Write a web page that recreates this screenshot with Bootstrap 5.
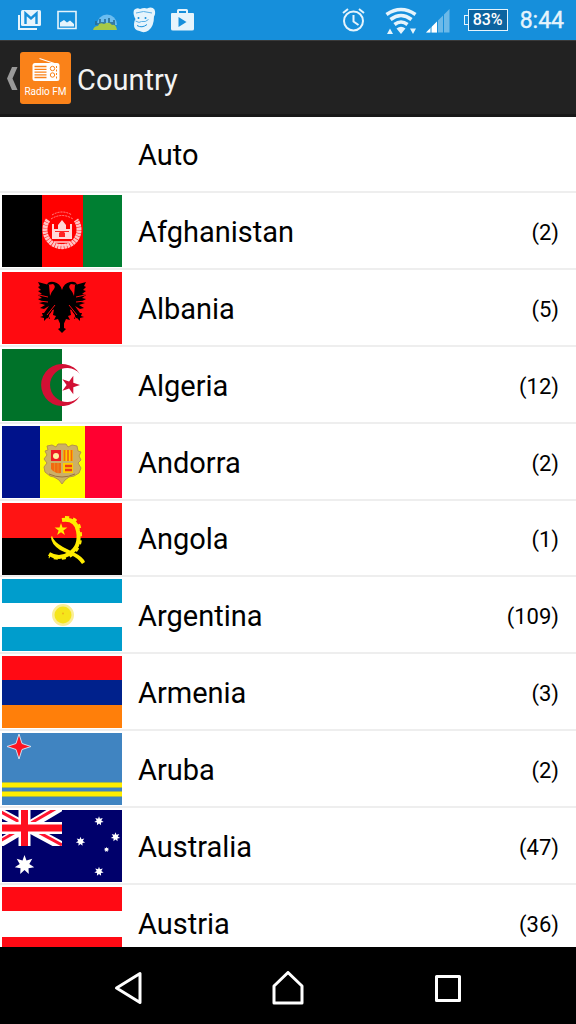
<!DOCTYPE html>
<html lang="en">
<head>
<meta charset="utf-8">
<meta name="viewport" content="width=device-width, initial-scale=1">
<title>Country</title>
<link rel="stylesheet" href="https://cdn.jsdelivr.net/npm/bootstrap@5.3.0/dist/css/bootstrap.min.css">
<style>
body{font-family:Roboto,sans-serif;background:#fff;color:#000;height:100vh}
svg{display:block;flex:none}
.statusbar{height:40px;background:#168fdb;color:#e6f4fc;padding:0 12px 0 16px}
.clock{font-size:23px;line-height:40px;margin-left:12px;padding-top:2px;-webkit-text-stroke:.4px}
.battery{font-size:16px;line-height:20px;background:#0c64a0;border:1px solid #e6f4fc;width:40px;height:22px;font-weight:500;color:#fff}
.batt-tip{width:4px;height:10px;border:1px solid #e6f4fc;border-right:0}
.appbar{height:77px;background:#222;border-top:1px solid #3a3a3a;border-bottom:3px solid #181818;padding:0 6px}
.upbtn{background:none;border:0}
.appbar h1{font-size:29px;line-height:36px;color:#f3f3f3;font-weight:400;margin-left:6px;padding-top:4px}
.countries{overflow:hidden;min-height:0}
.countries .list-group-item{height:77px;padding:2px 17px 0 2px;border:0;border-bottom:2px solid #eee;color:#000;flex:none}
.countries .list-group-item:nth-child(5n+1){height:76px}
.flag{width:120px;height:72px;margin-right:16px;align-self:flex-start}
.title{font-size:29px;line-height:36px}
.tally{font-size:22px;line-height:28px;padding-top:2px}
.navkeys{height:77px;background:#000;padding:0 48px}
.navkeys button{background:none;border:0;height:77px;padding:4px 0 0}
</style>
</head>
<body class="d-flex flex-column overflow-hidden">
<div class="statusbar d-flex align-items-center justify-content-between flex-shrink-0">
  <div class="d-flex align-items-center">
    <svg width="180" height="40" viewBox="16 0 180 40" role="img" aria-label="Notifications">
      <path d="M19 15v14h18" fill="none" stroke="#e6f4fc" stroke-width="2"/><path d="M58 11.500h18v17H58z" fill="none" stroke="#e6f4fc" stroke-width="1.600"/>
      <rect x="21" y="10" width="20" height="16" rx="1.500" fill="#e6f4fc"/>
      <path d="M25.500 24V13.500l5.500 5 5.500-5V24" fill="none" stroke="#168fdb" stroke-width="2.400"/>
      <path d="M60 26.500v-4l4-2.500 3 2.500 3-2 4 3.500v2.500z" fill="#e6f4fc"/>
      <path d="M97 25a10 10.500 0 0 1 20 0z" fill="#6bbdf0"/>
      <path d="M95 25v-4h2v2h2v-4h2v3h3v-3h2v4h2v-5h2v4h3v-2h2v5z" fill="#276a92" opacity=".8"/>
      <path d="M93 30q1-4 5-4 1-4 6-2 5-3 8 1 4-1 5 5z" fill="#a6c947"/>
      <path d="M134 10q3-3 6-1 4-1.500 7-.5 5-2.500 7.500 1 1.500 4-.5 7 0 10-5.500 14-4.500 3-9 .5-6-1-5.500-7 0-3 1.500-5-3-5-1.500-9z" fill="#e6f4fc"/>
      <path d="M136 13q7-3 16 0M135.500 21q4 2.500 6 .500 4 1 7-2" fill="none" stroke="#5bb0e6" stroke-width="1"/>
      <circle cx="138.500" cy="18" r="1" fill="#168fdb"/><circle cx="145.500" cy="18" r="1" fill="#168fdb"/>
      <path d="M137 25.500q5 3 10-1" fill="none" stroke="#168fdb"/>
      <path d="M172 13h5v-2.500q0-1.500 1.500-1.500h8q1.500 0 1.500 1.500V13h5q1 0 1 1v15q0 1.500-2 1.500h-19q-2 0-2-1.500V14q0-1 1-1zm7 0h7v-2h-7z" fill="#e6f4fc" fill-rule="evenodd"/>
      <path d="M178.500 17v10l8-5z" fill="#168fdb"/>
    </svg>
  </div>
  <div class="d-flex align-items-center">
    <svg width="120" height="40" viewBox="340 0 120 40" role="img" aria-label="Alarm, Wi-Fi, mobile signal">
      <g fill="none" stroke="#e6f4fc" stroke-width="2"><circle cx="353.500" cy="21" r="9.500"/><path d="M353.500 15v6.500l5 3.500M343 13l5-4M359 9l5 4"/></g>
      <g fill="none" stroke="#e6f4fc" stroke-width="3.600"><path d="M386.500 14.500q14.500-10 29 0M390.500 19.500q10.500-8 21 0M394.500 24.500q6.500-5 13 0"/></g>
      <path d="M396.500 28.500q4.500-3.500 9 0l-4.500 5.500z" fill="#e6f4fc"/>
      <path d="M387 34l3-5.500 3 5.500zM410 28.500h6l-3 5.500z" fill="#e6f4fc"/>
      <path d="M426 32.500L449.500 9v23.500z" fill="#6cb9e8"/><path d="M426 32.500l11-11v11z" fill="#fff"/>
      <path d="M431 24v9M437.500 18v15M443.500 12v21" stroke="#168fdb" stroke-width="1"/>
    </svg>
    <div class="d-flex align-items-center ms-1" aria-label="Battery"><span class="batt-tip"></span><span class="battery text-center">83%</span></div>
    <span class="clock">8:44</span>
  </div>
</div>

<header class="appbar d-flex align-items-center flex-shrink-0">
  <button class="upbtn d-flex align-items-center p-0" type="button" aria-label="Back">
    <svg width="14" height="52" viewBox="6 52 14 52"><path d="M12 67h5.500l-5 11.500 5 11.500H12L7 78.500z" fill="#999"/></svg>
    <svg width="51" height="52" viewBox="0 0 51 52">
      <rect width="51" height="52" rx="3" fill="#fa8219"/>
      <path d="M19.500 6.500L36 12" stroke="#fff" stroke-width="1.300"/>
      <rect x="12.500" y="11" width="27" height="18" rx="2.500" fill="#fff"/>
      <path d="M14.500 14.500h12M14.500 17.300h12M14.500 20.100h12M14.500 22.900h12M14.500 25.500h12" stroke="#fa8219" stroke-width="1.300"/>
      <g fill="none" stroke="#fa8219"><circle cx="32.500" cy="16.500" r="2.200"/><circle cx="32.500" cy="23" r="2.200"/></g>
      <path d="M36.500 14v13" stroke="#fa8219" stroke-width="1" stroke-dasharray="2 1.500"/>
      <text x="25.500" y="43" font-size="10" font-family="Roboto, sans-serif" fill="#fff" text-anchor="middle">Radio FM</text>
    </svg>
  </button>
  <h1 class="mb-0">Country</h1>
</header>

<main class="countries list-group list-group-flush flex-grow-1">
  <a href="#" class="list-group-item d-flex align-items-center"><span class="flag"></span><span class="title flex-grow-1">Auto</span></a>
  <a href="#" class="list-group-item d-flex align-items-center">
    <svg class="flag" viewBox="0 0 120 72"><path d="M0 0h40v72H0z"/><path fill="#f00" d="M40 0h41v72H40z"/><path fill="#007f32" d="M81 0h39v72H81z"/>
      <path d="M46 25a17 17 0 1 0 28 0" fill="none" stroke="#ffc4c4" stroke-width="5" stroke-dasharray="2.500 .5"/>
      <path d="M50 20q10-6 20 0M49 24q11-7 22 0" stroke="#f88" fill="none" stroke-dasharray="2 1"/>
      <path fill="#ffd8d8" d="M50 44V29h2v5h4v-4l4-5 4 5v4h4v-5h2v15z"/><path fill="#f22" d="M57 42v-4q3-4 6 0v4zM53 36h14v1H53z"/><path d="M52 47h16M54 50h12" stroke="#fcc" stroke-width="1.500"/></svg>
    <span class="title flex-grow-1">Afghanistan</span><span class="tally">(2)</span></a>
  <a href="#" class="list-group-item d-flex align-items-center">
    <svg class="flag" viewBox="0 0 120 72"><path fill="#ff0a10" d="M0 0h120v72H0z"/>
      <path d="M60 18q-2-7-8-8-6-1-7 3l6-1q3 2 1 5-3 3-4 7l-1-11-11-3 2 4-2 1 3 3-3 1 4 3-4 1 4 3-4 1 5 3-4 1 6 2-5 3 4 1 5-3-5 7-2 0 1 3-3 1 4 1 0 3 3-3 3 1-1-4 5-6-1 6 3 1-2 4 4-1 4 9 4-9 4 1-2-4 3-1-1-6 5 6-1 4 3-1 3 3 0-3 4-1-3-1 1-3-2 0-5-7 5 3 4-1-5-3 6-2-4-1 5-3-4-1 4-3-4-1 4-3-3-1 3-3-2-1 2-4-11 3-1 11q-1-4-4-7-2-3 1-5l6 1q-1-4-7-3-6 1-8 8z"/>
      <path d="M58 50h4v6l2 1-4 4-4-4 2-1z"/>
      <path d="M53 33l-8 10M67 33l8 10M51 38l-5 9M69 38l5 9M37 23l9 2M83 23l-9 2M37 29l9 1M83 29l-9 1" stroke="#ff0a10"/></svg>
    <span class="title flex-grow-1">Albania</span><span class="tally">(5)</span></a>
  <a href="#" class="list-group-item d-flex align-items-center">
    <svg class="flag" viewBox="0 0 120 72"><path fill="#fff" d="M0 0h120v72H0z"/><path fill="#007229" d="M0 0h60v72H0z"/>
      <path fill="#d21034" d="M78 25a21 21 0 1 0 0 22 17 17 0 1 1 0-22z"/><path fill="#d21034" d="M78 36l-6.700 2.200v7l-4.200-5.700-6.700 2.200 4.200-5.700-4.200-5.700 6.700 2.200 4.200-5.700v7z"/></svg>
    <span class="title flex-grow-1">Algeria</span><span class="tally">(12)</span></a>
  <a href="#" class="list-group-item d-flex align-items-center">
    <svg class="flag" viewBox="0 0 120 72"><path fill="#00128b" d="M0 0h38v72H0z"/><path fill="#ff0" d="M38 0h45v72H38z"/><path fill="#ff0030" d="M83 0h37v72H83z"/>
      <path fill="#cbb067" stroke="#b59448" d="M45 20l5-1 4 2 2-3h8l2 3 4-2 5 1 1 5 3 1-2 4 2 4-3 3 3 5-2 5-5 3-5 1-4 3-3 4-3-4-5-3-4-1-5-4-1-5 3-4-3-4 3-4-2-4 3-1z"/>
      <path fill="#ed1c24" d="M49 24h10v11H49z"/><circle cx="54" cy="30" r="3" fill="#fff0a0"/><path fill="#fc0" d="M61 24h10v11H61zM61 37h10v10H61z"/><path fill="#f26a10" d="M49 37h10v10q-6 1-10-4z"/><path d="M62.500 24v11M66 24v11M69.500 24v11" stroke="#f26a10" stroke-width="1.800"/><path d="M63 40h7M63 44h7" stroke="#ed3c14" stroke-width="2.400"/><path d="M52.500 37v9M56 37v10" stroke="#e98b20"/><path d="M47 48q13 6 26 0" fill="none" stroke="#9a7140"/></svg>
    <span class="title flex-grow-1">Andorra</span><span class="tally">(2)</span></a>
  <a href="#" class="list-group-item d-flex align-items-center">
    <svg class="flag" viewBox="0 0 120 72"><path fill="#ff1414" d="M0 0h120v35H0z"/><path d="M0 35h120v37H0z"/>
      <path d="M60 17q14-2 16 11 3 16-9 23-10 6-20 0" fill="none" stroke="#ffec00" stroke-width="4"/>
      <path d="M63 14.500q14 0 15 13 3 16-9 25-10 5-22 1" fill="none" stroke="#ffec00" stroke-width="3" stroke-dasharray="4 4"/>
      <path fill="#ffec00" d="M50 33q2 6 11 11l12 6q8 4 10 9l-3 2q-4-6-11-9l-11-5q-9-6-9-13zM59 20l1.500 4.600h4.900l-4 2.900 1.500 4.600-3.900-2.900-3.900 2.900 1.500-4.600-4-2.900h4.900z"/></svg>
    <span class="title flex-grow-1">Angola</span><span class="tally">(1)</span></a>
  <a href="#" class="list-group-item d-flex align-items-center">
    <svg class="flag" viewBox="0 0 120 72"><path fill="#fff" d="M0 0h120v72H0z"/><path fill="#009dcc" d="M0 0h120v24H0zM0 48h120v24H0z"/><circle cx="61" cy="36" r="9.500" fill="none" stroke="#faee98" stroke-width="3"/><circle cx="61" cy="36" r="8.500" fill="#f5e51b"/><circle cx="61" cy="34.500" r="1" fill="#f0b21b"/></svg>
    <span class="title flex-grow-1">Argentina</span><span class="tally">(109)</span></a>
  <a href="#" class="list-group-item d-flex align-items-center">
    <svg class="flag" viewBox="0 0 120 72"><path fill="#ff0a14" d="M0 0h120v24H0z"/><path fill="#00218c" d="M0 24h120v25H0z"/><path fill="#ff7f0a" d="M0 49h120v23H0z"/></svg>
    <span class="title flex-grow-1">Armenia</span><span class="tally">(3)</span></a>
  <a href="#" class="list-group-item d-flex align-items-center">
    <svg class="flag" viewBox="0 0 120 72"><path fill="#4084c1" d="M0 0h120v72H0z"/><path fill="#ffed00" d="M0 50h120v4H0zM0 59h120v4H0z"/><path d="M0 49.500h120M0 54.500h120M0 58.500h120M0 63.500h120" stroke="#a6b84f"/><path fill="#ff1420" stroke="#cfe0ef" d="M17 1l3 9.500 9 3-9 3-3 9.500-3-9.500-9-3 9-3z"/></svg>
    <span class="title flex-grow-1">Aruba</span><span class="tally">(2)</span></a>
  <a href="#" class="list-group-item d-flex align-items-center">
    <svg class="flag" viewBox="0 0 120 72"><defs><clipPath id="canton"><path d="M0 0h60v36H0z"/></clipPath>
      <path id="star7" d="M0-10l2 5.500 5.800-1.700-3 5.200L9.700 2.200 4 3.200l.3 5.800L0 5-4.300 9 -4 3.200-9.700 2.200-4.800-1-7.800-6.200-2-4.500z"/></defs>
      <path fill="#00006b" d="M0 0h120v72H0z"/>
      <g clip-path="url(#canton)"><path d="M-14-4l74 40M60-4L-14 40" stroke="#fff" stroke-width="9"/><path d="M-14-5l74 40M60-5L-14 38" stroke="#ff1430" stroke-width="3"/><path d="M22.500 0v36M0 18h60" stroke="#fff" stroke-width="12"/><path d="M22.500 0v36M0 18h60" stroke="#ff1020" stroke-width="7"/></g>
      <g fill="#fff"><use href="#star7" transform="translate(22.500 55)"/><use href="#star7" transform="translate(97 11) scale(.48)"/><use href="#star7" transform="translate(113.500 27) scale(.48)"/><use href="#star7" transform="translate(78.500 31.500) scale(.48)"/><use href="#star7" transform="translate(97 61.500) scale(.48)"/><use href="#star7" transform="translate(104.500 39.500) scale(.28)"/></g></svg>
    <span class="title flex-grow-1">Australia</span><span class="tally">(47)</span></a>
  <a href="#" class="list-group-item d-flex align-items-center">
    <svg class="flag" viewBox="0 0 120 72"><path fill="#fff" d="M0 0h120v72H0z"/><path fill="#ff0a14" d="M0 0h120v24H0zM0 50h120v22H0z"/></svg>
    <span class="title flex-grow-1">Austria</span><span class="tally">(36)</span></a>
</main>

<nav class="navkeys d-flex flex-shrink-0" aria-label="System navigation">
  <button type="button" class="flex-fill d-flex justify-content-center align-items-center" aria-label="Back"><svg width="34" height="34" viewBox="0 0 34 34" fill="none" stroke="#fff" stroke-width="3" stroke-linejoin="round"><path d="M29 2.500v29L5.500 17z"/></svg></button>
  <button type="button" class="flex-fill d-flex justify-content-center align-items-center" aria-label="Home"><svg width="34" height="34" viewBox="0 0 34 34" fill="none" stroke="#fff" stroke-width="3" stroke-linejoin="round"><path d="M17 1.500L31 15v17H3V15z"/></svg></button>
  <button type="button" class="flex-fill d-flex justify-content-center align-items-center" aria-label="Recent apps"><svg width="34" height="34" viewBox="0 0 34 34" fill="none" stroke="#fff" stroke-width="3" stroke-linejoin="round"><path d="M5.500 5.500h23v24h-23z"/></svg></button>
</nav>
<script src="https://cdn.jsdelivr.net/npm/bootstrap@5.3.0/dist/js/bootstrap.bundle.min.js"></script>
</body>
</html>
